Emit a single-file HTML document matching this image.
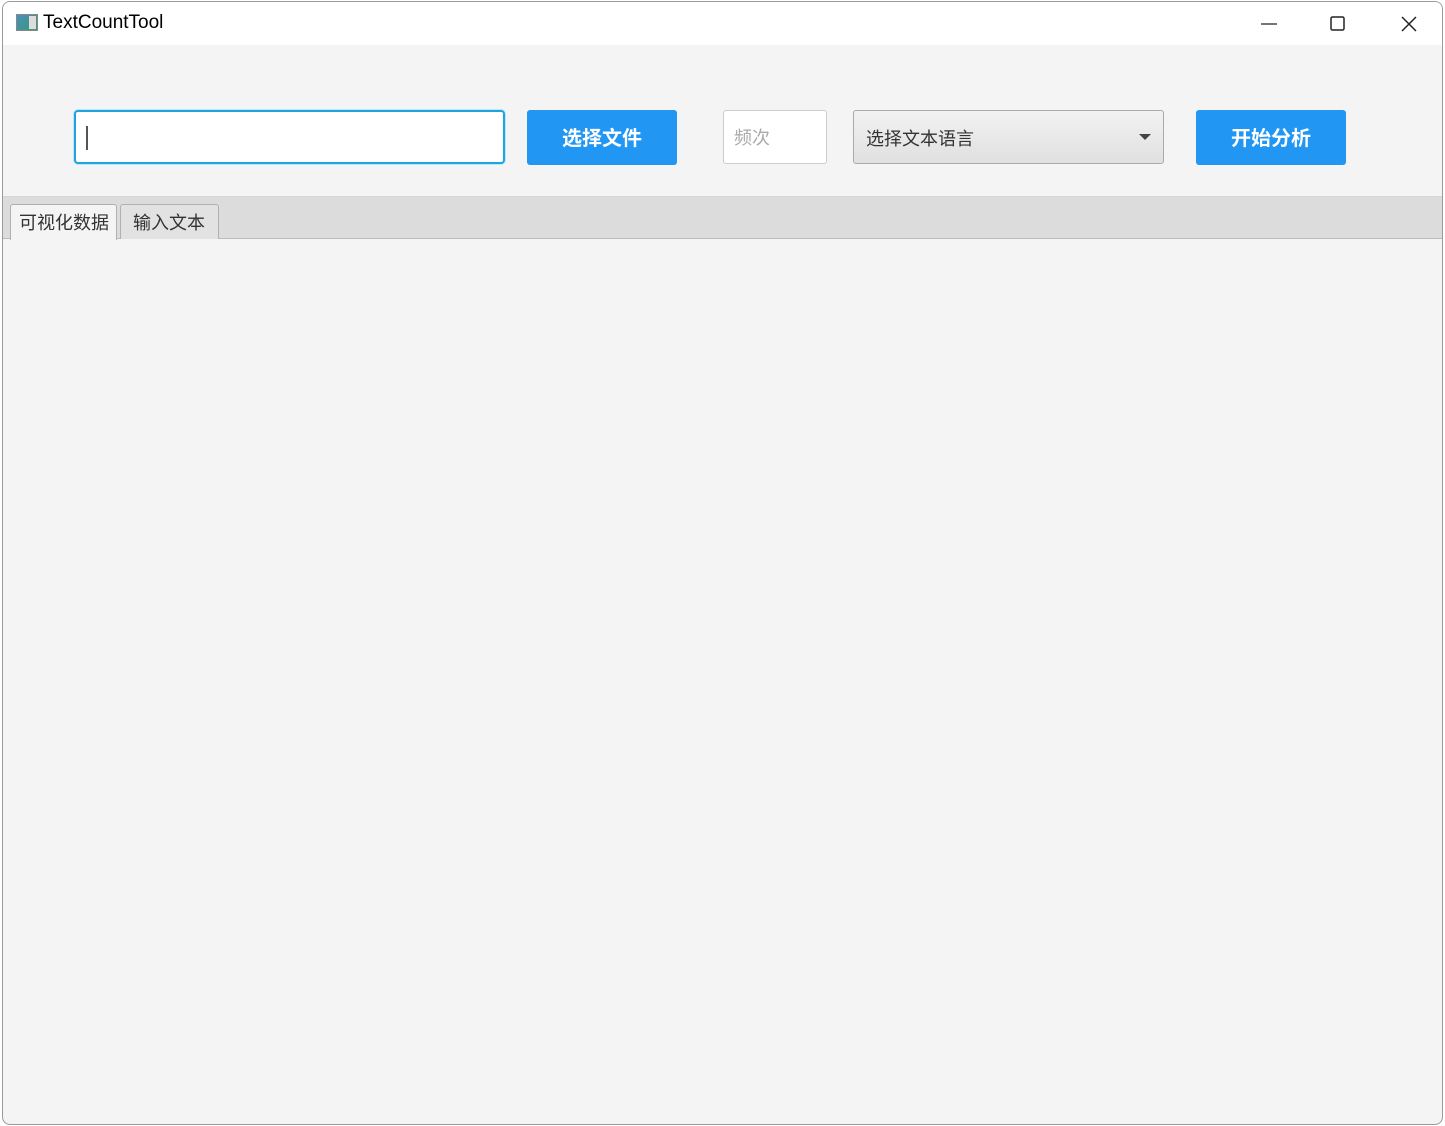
<!DOCTYPE html>
<html><head><meta charset="utf-8"><style>
*{margin:0;padding:0;box-sizing:border-box}
body{width:1445px;height:1126px;overflow:hidden;background:#fff;font-family:"Liberation Sans","Noto Sans CJK SC",sans-serif;position:relative}
.win{position:absolute;left:2px;top:1px;width:1441px;height:1124px;border:1px solid #9a9a9a;border-radius:8px;overflow:hidden;background:#f4f4f4}
.title{position:absolute;left:0;top:0;width:100%;height:43px;background:#fff}
.title .t{position:absolute;left:40px;top:10px;font-size:19px;color:#000}
.ico{position:absolute;left:13px;top:12px;width:22px;height:17px;border:1px solid #888;background:linear-gradient(135deg,#4a8ec0,#3a9a6a)}
.ico:after{content:"";position:absolute;right:1px;top:1px;width:7px;height:13px;background:#ddd}
.abs{position:absolute}
.input{left:71px;top:108px;width:431px;height:54px;background:#fff;border:2px solid #1ea4e0;border-radius:4px;box-shadow:0 0 0 1px #bfe6f6}
.caret{left:10px;top:14px;width:2px;height:24px;background:#555}
.btn{background:#2196f3;color:#fff;font-weight:bold;font-size:20px;text-align:center;line-height:58px;border-radius:3px;height:55px;width:150px}
.freq{left:720px;top:108px;width:104px;height:54px;background:#fff;border:1px solid #ccc;border-radius:3px;color:#aaa;font-size:18px;padding:13px 10px}
.sel{left:850px;top:108px;width:311px;height:54px;border:1px solid #aaa;border-radius:3px;background:linear-gradient(#f2f2f2,#e0e0e0);font-size:18px;color:#333;padding:14px 12px}
.arrow{right:12px;top:23px;width:0;height:0;border-left:6px solid transparent;border-right:6px solid transparent;border-top:6px solid #444}
.band{left:0;top:194px;width:100%;height:43px;background:#dcdcdc;border-bottom:1px solid #bbb;border-top:1px solid #d6d6d6}
.tab{top:202px;height:35px;border:1px solid #b0b0b0;border-bottom:none;border-radius:3px 3px 0 0;font-size:18px;color:#333;padding:4px 0 0 8px;white-space:nowrap;overflow:hidden}
</style></head><body>
<div class="win">
<div class="title"><div class="ico"></div><div class="t">TextCountTool</div>
<svg class="abs" style="left:1256px;top:12px" width="170" height="20"><line x1="2" y1="10" x2="18" y2="10" stroke="#222" stroke-width="1.2"/><rect x="72" y="3" width="13" height="13" rx="1.5" fill="none" stroke="#222" stroke-width="1.5"/><path d="M143 3 L157 17 M157 3 L143 17" stroke="#222" stroke-width="1.5"/></svg>
</div>
<div class="abs input"><div class="abs caret"></div></div>
<div class="abs btn" style="left:524px;top:108px">选择文件</div>
<div class="abs freq">频次</div>
<div class="abs sel">选择文本语言<div class="abs arrow"></div></div>
<div class="abs btn" style="left:1193px;top:108px">开始分析</div>
<div class="abs band"></div>
<div class="abs tab" style="left:7px;width:107px;background:#f4f4f4;height:36px">可视化数据</div>
<div class="abs tab" style="left:117px;width:99px;background:#e2e2e2;padding-left:12px">输入文本</div>
</div>
</body></html>
